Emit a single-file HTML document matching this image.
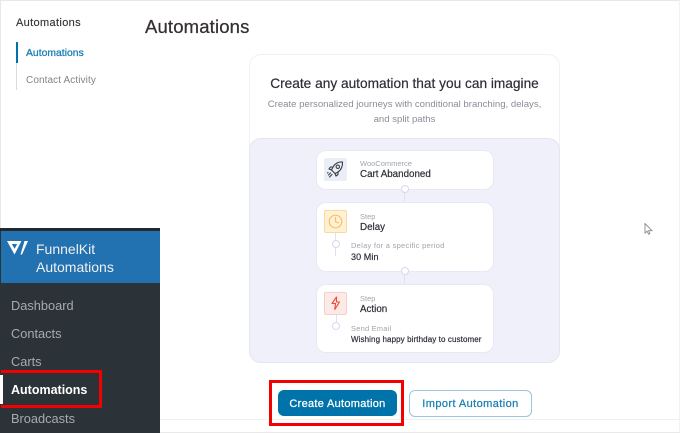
<!DOCTYPE html>
<html>
<head>
<meta charset="utf-8">
<style>
html,body{margin:0;padding:0;width:680px;height:433px;overflow:hidden;background:#fff;font-family:"Liberation Sans",sans-serif;}
#w{position:absolute;left:0;top:0;width:680px;height:433px;filter:blur(.25px);}
.a{position:absolute;white-space:nowrap;}
.b{position:absolute;box-sizing:border-box;}
.node{position:absolute;box-sizing:border-box;left:316px;width:178px;background:#fff;border:1px solid #e8e9f4;border-radius:10px;}
.dot{position:absolute;box-sizing:border-box;width:8px;height:8px;border-radius:50%;background:#fff;border:1.5px solid #d5d8ea;}
.ln{position:absolute;background:#dfe1ef;width:1px;}
.small{color:#a2a4ac;font-size:7.5px;}
.bold{color:#2c2f36;font-size:9.8px;-webkit-text-stroke:.2px #2c2f36;}
</style>
</head>
<body>
<div id="w">
<div class="b" style="left:0;top:0;width:680px;height:1px;background:#e8e8e8"></div>
<div class="b" style="left:0;top:0;width:1px;height:228px;background:#e8e8e8"></div>
<div class="b" style="left:679px;top:0;width:1px;height:433px;background:#f2f2f2"></div>

<div class="a" style="left:16px;top:17px;font-size:11px;color:#353535;letter-spacing:.35px;-webkit-text-stroke:.15px #353535">Automations</div>
<div class="b" style="left:16px;top:42px;width:1px;height:48px;background:#d9dbe3"></div>
<div class="b" style="left:16px;top:42px;width:2px;height:21px;background:#0073aa"></div>
<div class="a" style="left:26px;top:48px;font-size:10.4px;color:#1a7fb3;-webkit-text-stroke:.3px #1a7fb3">Automations</div>
<div class="a" style="left:26px;top:75px;font-size:10px;color:#82848c;letter-spacing:.1px">Contact Activity</div>

<div class="a" style="left:145px;top:16px;font-size:18.5px;color:#353030;letter-spacing:.15px;-webkit-text-stroke:.25px #353030">Automations</div>

<div class="b" style="left:249px;top:54px;width:311px;height:100px;border:1px solid #f1f1f5;border-bottom:0;border-radius:12px 12px 0 0"></div>
<div class="a" style="left:249px;width:311px;text-align:center;top:76px;font-size:13.7px;color:#2d2e36;-webkit-text-stroke:.2px #2d2e36">Create any automation that you can imagine</div>
<div class="a" style="left:249px;width:311px;text-align:center;top:99px;font-size:9.6px;color:#8b8d96">Create personalized journeys with conditional branching, delays,</div>
<div class="a" style="left:249px;width:311px;text-align:center;top:114px;font-size:9.6px;color:#8b8d96">and split paths</div>

<div class="b" style="left:249px;top:138px;width:311px;height:225px;background:#eff0f9;border:1px solid #e4e5f0;border-radius:12px"></div>

<div class="ln" style="left:404px;top:189px;height:14px"></div>
<div class="ln" style="left:404px;top:271px;height:14px"></div>

<div class="node" style="top:150px;height:40px"></div>
<div class="b" style="left:324px;top:158px;width:23px;height:23px;background:#eaeef6;border-radius:2px"></div>
<svg class="b" style="left:326px;top:160px" width="19" height="19" viewBox="0 0 19 19" fill="none" stroke="#3a3d45" stroke-width="1.100" stroke-linejoin="round" stroke-linecap="round">
<path d="M16.500 2c-4-.3-7.500 1.500-9.500 5L5.500 10l3.500 3.500 3-1.500c3.200-2 4.800-6 4.500-10z"/>
<circle cx="11.800" cy="6.800" r="1.700"/>
<path d="M7 7H4.500L3 9l2.500 1M12 12v2.500l-2 1.500-1-2.500M4.500 13l-2 2M6 14.500l-2.500 2.500M2 12.500l-.5.500"/>
</svg>
<div class="a small" style="left:360px;top:159px">WooCommerce</div>
<div class="a bold" style="left:360px;top:169px">Cart Abandoned</div>

<div class="node" style="top:202px;height:70px"></div>
<div class="b" style="left:324px;top:210px;width:23px;height:23px;background:#fff1d6;border:1px solid #fbd998;border-radius:2px"></div>
<svg class="b" style="left:328px;top:214px" width="15" height="15" viewBox="0 0 15 15" fill="none" stroke="#f8c268" stroke-width="1.200" stroke-linecap="round">
<circle cx="7.500" cy="7.500" r="6.300"/>
<path d="M7.500 3.500v4.300l3 1"/>
</svg>
<div class="a small" style="left:360px;top:212px">Step</div>
<div class="a bold" style="left:360px;top:222px">Delay</div>
<div class="ln" style="left:335px;top:233px;height:23px"></div>
<div class="dot" style="left:332px;top:240px"></div>
<div class="a small" style="left:351px;top:241px;letter-spacing:.27px">Delay for a specific period</div>
<div class="a" style="left:351px;top:252px;font-size:9px;color:#2c2f36;letter-spacing:.1px;-webkit-text-stroke:.2px #2c2f36">30 Min</div>

<div class="node" style="top:284px;height:69px"></div>
<div class="b" style="left:324px;top:292px;width:23px;height:23px;background:#fde9e6;border:1px solid #f5cfca;border-radius:2px"></div>
<svg class="b" style="left:329px;top:295px" width="14" height="17" viewBox="0 0 14 17" fill="none" stroke="#ea4b35" stroke-width="1.100" stroke-linejoin="round">
<path d="M7.500 2L3 8.500h3.500l-.7 6 4.700-7.500H7.500z"/>
</svg>
<div class="a small" style="left:360px;top:294px">Step</div>
<div class="a bold" style="left:360px;top:304px">Action</div>
<div class="ln" style="left:336px;top:315px;height:8px"></div>
<div class="dot" style="left:332px;top:322px"></div>
<div class="a small" style="left:351px;top:324px;letter-spacing:.2px">Send Email</div>
<div class="a" style="left:351px;top:335px;font-size:8px;color:#2c2f36;letter-spacing:.1px;-webkit-text-stroke:.2px #2c2f36">Wishing happy birthday to customer</div>

<div class="dot" style="left:401px;top:185px"></div>
<div class="dot" style="left:401px;top:267px"></div>

<div class="b" style="left:160px;top:419px;width:519px;height:1px;background:#f0f0f0"></div>
<div class="b" style="left:160px;top:432px;width:520px;height:1px;background:#e9e9e9"></div>

<div class="b" style="left:278px;top:390px;width:119px;height:26px;background:#0073aa;border-radius:6px"></div>
<div class="a" style="left:278px;width:119px;text-align:center;top:398px;font-size:11px;color:#fff;letter-spacing:.3px;-webkit-text-stroke:.25px #fff">Create Automation</div>
<div class="b" style="left:409px;top:390px;width:123px;height:27px;background:#fff;border:1px solid #9ac7dc;border-radius:6px"></div>
<div class="a" style="left:409px;width:123px;text-align:center;top:398px;font-size:11px;color:#1a7fb0;letter-spacing:.42px;-webkit-text-stroke:.25px #1a7fb0">Import Automation</div>
<div class="b" style="left:269px;top:380px;width:135px;height:46px;border:3px solid #f30000"></div>

<svg class="b" style="left:644px;top:223px" width="10" height="13" viewBox="0 0 10 13"><path d="M1 .5v9.500l2.200-1.800 1.300 3 1.400-.6-1.300-2.900H8z" fill="#fff" stroke="#8a8a8a" stroke-width=".9"/></svg>

<div class="b" style="left:0;top:228px;width:160px;height:205px;background:#2c3338"></div>
<div class="b" style="left:0;top:228px;width:160px;height:3px;background:#23282d"></div>
<div class="b" style="left:1px;top:231px;width:159px;height:52px;background:#2271b1"></div>
<svg class="b" style="left:7px;top:241px" width="21" height="14" viewBox="0 0 21 14" fill="#fff"><path fill-rule="evenodd" d="M0 0h14.500L7.500 13.500zM4.800 3l2.800 4.800L10.200 3z"/><path d="M13.500 13.500L17.500 0h3.500l-6 13.500z"/></svg>
<div class="a" style="left:36px;top:241px;font-size:14px;color:#f0f0f1">FunnelKit</div>
<div class="a" style="left:36px;top:259px;font-size:14px;color:#f0f0f1">Automations</div>
<div class="a" style="left:11px;top:298px;font-size:12.8px;color:#a7aaad">Dashboard</div>
<div class="a" style="left:11px;top:326px;font-size:12.8px;color:#a7aaad">Contacts</div>
<div class="a" style="left:11px;top:354px;font-size:12.8px;color:#a7aaad">Carts</div>
<div class="a" style="left:11px;top:383px;font-size:12.5px;color:#fff;font-weight:bold">Automations</div>
<div class="a" style="left:11px;top:411px;font-size:12.8px;color:#a7aaad">Broadcasts</div>
<div class="b" style="left:0;top:375px;width:3px;height:29px;background:#fff"></div>
<div class="b" style="left:1px;top:370px;width:101px;height:38px;border:3px solid #f30000;border-left:0"></div>
</div>
</body>
</html>
